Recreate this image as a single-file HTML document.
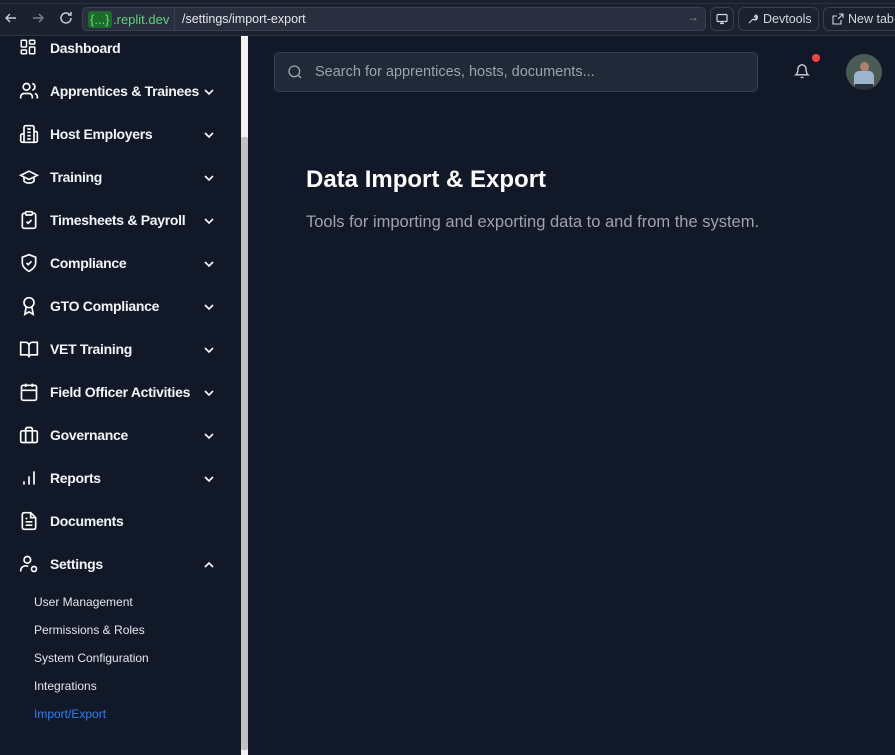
<!DOCTYPE html>
<html><head><meta charset="utf-8"><style>
*{box-sizing:border-box;margin:0;padding:0}
body{width:895px;height:755px;overflow:hidden;background:#111827;font-family:"Liberation Sans","DejaVu Sans",sans-serif;position:relative;color:#fff}
.top{position:absolute;left:0;top:0;width:895px;height:36px;background:#1c2130;border-bottom:1px solid #2b3142}
.top .tabs{position:absolute;top:0;left:0;width:895px;height:4px;border-bottom:1px solid #2b3142}
.url{position:absolute;left:82px;top:7px;width:624px;height:24px;background:#2a2f40;border:1px solid #3a4052;border-radius:5px;font-size:13px}
.btn{position:absolute;top:7px;height:24px;border:1px solid #3a4052;border-radius:6px;color:#d4d7de;font-size:12.5px;line-height:22px}
.side{position:absolute;left:0;top:36px;width:241px;height:719px;background:#111827}
.item{position:absolute;left:0;width:241px;height:20px;font-weight:bold;font-size:14px;letter-spacing:-0.3px;color:#f3f4f6}
.item svg.i{position:absolute;left:19px;top:-1px}
.item span{position:absolute;left:50px;top:1px;white-space:nowrap}
.item svg.c{position:absolute;left:203px;top:6px}
.sub{position:absolute;left:34px;font-size:12px;color:#e5e7eb}
.track{position:absolute;left:241px;top:36px;width:7px;height:719px;background:#f1f1f1}
.thumb{position:absolute;left:241px;top:137px;width:7px;height:613px;background:#c1c1c1;border-radius:2px}
.search{position:absolute;left:274px;top:52px;width:484px;height:40px;background:#1f2937;border:1px solid #374151;border-radius:6px;color:#9ca3af;font-size:14.5px}
</style></head><body>
<div class="top"><div class="tabs"></div>
<svg style="position:absolute;left:4px;top:11px" width="14" height="14" viewBox="0 0 14 14" fill="none" stroke="#c9ccd4" stroke-width="1.4"><path d="M12 7H2M6 3L2 7l4 4"/></svg>
<svg style="position:absolute;left:31px;top:11px" width="14" height="14" viewBox="0 0 14 14" fill="none" stroke="#7b808c" stroke-width="1.4"><path d="M2 7h10M8 3l4 4-4 4"/></svg>
<svg style="position:absolute;left:58px;top:10px" width="16" height="16" viewBox="0 0 16 16" fill="none" stroke="#c9ccd4" stroke-width="1.5"><path d="M13 8a5 5 0 1 1-1.5-3.6M13 2v3h-3"/></svg>
<div class="url">
<span style="position:absolute;left:5px;top:3px;background:#1d6b2a;color:#5fe07a;border-radius:3px;padding:0 2px;height:17px;line-height:17px">{...}</span>
<span style="position:absolute;left:30px;top:3px;color:#5fd37a;line-height:17px">.replit.dev</span>
<span style="position:absolute;left:91px;top:0;width:1px;height:22px;background:#3a4052"></span>
<span style="position:absolute;left:99px;top:3px;color:#e5e7eb;line-height:17px;font-size:12.5px">/settings/import-export</span>
<span style="position:absolute;left:604px;top:2px;color:#8a8f9b;font-size:12px">→</span>
</div>
<div class="btn" style="left:710px;width:24px"><svg style="position:absolute;left:5px;top:5px" width="12" height="12" viewBox="0 0 12 12" fill="none" stroke="#d4d7de" stroke-width="1.2"><rect x="1" y="1.5" width="10" height="7" rx="1"/><path d="M6 8.5v2M4 10.5h4"/></svg></div>
<div class="btn" style="left:738px;width:81px;padding-left:24px">Devtools<svg style="position:absolute;left:8px;top:5px" width="12" height="12" viewBox="0 0 12 12" fill="none" stroke="#d4d7de" stroke-width="1.1"><path d="M2 10l4-4M6 6a2.5 2.5 0 1 0 3-4L7.5 3.5 8.5 4.5 10 3a2.5 2.5 0 0 1-4 3"/></svg></div>
<div class="btn" style="left:823px;width:80px;padding-left:24px">New tab<svg style="position:absolute;left:8px;top:5px" width="12" height="12" viewBox="0 0 12 12" fill="none" stroke="#d4d7de" stroke-width="1.1"><path d="M7 1h4v4M11 1L6 6M9 7v4H1V3h4"/></svg></div>
</div>

<div class="side">
<div class="item" style="top:3px"><svg class="i" width="18" height="18" viewBox="0 0 24 24" fill="none" stroke="#fff" stroke-width="2"><rect x="3" y="3" width="7" height="9" rx="1"/><rect x="14" y="3" width="7" height="5" rx="1"/><rect x="14" y="12" width="7" height="9" rx="1"/><rect x="3" y="16" width="7" height="5" rx="1"/></svg><span>Dashboard</span></div>
<div class="item" style="top:46px"><svg class="i" width="20" height="20" viewBox="0 0 24 24" fill="none" stroke="#fff" stroke-width="2"><path d="M16 21v-2a4 4 0 0 0-4-4H6a4 4 0 0 0-4 4v2"/><circle cx="9" cy="7" r="4"/><path d="M22 21v-2a4 4 0 0 0-3-3.87M16 3.13a4 4 0 0 1 0 7.75"/></svg><span>Apprentices &amp; Trainees</span><svg class="c" width="12" height="8" viewBox="0 0 12 8" fill="none" stroke="#fff" stroke-width="1.6"><path d="M2 2l4 4 4-4"/></svg></div>
<div class="item" style="top:89px"><svg class="i" width="20" height="20" viewBox="0 0 24 24" fill="none" stroke="#fff" stroke-width="2"><path d="M6 22V4a2 2 0 0 1 2-2h8a2 2 0 0 1 2 2v18zM6 12H4a2 2 0 0 0-2 2v6a2 2 0 0 0 2 2h2M18 9h2a2 2 0 0 1 2 2v9a2 2 0 0 1-2 2h-2M10 6h4M10 10h4M10 14h4M10 18h4"/></svg><span>Host Employers</span><svg class="c" width="12" height="8" viewBox="0 0 12 8" fill="none" stroke="#fff" stroke-width="1.6"><path d="M2 2l4 4 4-4"/></svg></div>
<div class="item" style="top:132px"><svg class="i" width="20" height="20" viewBox="0 0 24 24" fill="none" stroke="#fff" stroke-width="2"><path d="M22 10L12 5 2 10l10 5 10-5zM6 12v5c3 3 9 3 12 0v-5"/></svg><span>Training</span><svg class="c" width="12" height="8" viewBox="0 0 12 8" fill="none" stroke="#fff" stroke-width="1.6"><path d="M2 2l4 4 4-4"/></svg></div>
<div class="item" style="top:175px"><svg class="i" width="20" height="20" viewBox="0 0 24 24" fill="none" stroke="#fff" stroke-width="2"><rect x="8" y="2" width="8" height="4" rx="1"/><path d="M16 4h2a2 2 0 0 1 2 2v14a2 2 0 0 1-2 2H6a2 2 0 0 1-2-2V6a2 2 0 0 1 2-2h2M9 14l2 2 4-4"/></svg><span>Timesheets &amp; Payroll</span><svg class="c" width="12" height="8" viewBox="0 0 12 8" fill="none" stroke="#fff" stroke-width="1.6"><path d="M2 2l4 4 4-4"/></svg></div>
<div class="item" style="top:218px"><svg class="i" width="20" height="20" viewBox="0 0 24 24" fill="none" stroke="#fff" stroke-width="2"><path d="M12 22s8-4 8-10V5l-8-3-8 3v7c0 6 8 10 8 10zM9 12l2 2 4-4"/></svg><span>Compliance</span><svg class="c" width="12" height="8" viewBox="0 0 12 8" fill="none" stroke="#fff" stroke-width="1.6"><path d="M2 2l4 4 4-4"/></svg></div>
<div class="item" style="top:261px"><svg class="i" width="20" height="20" viewBox="0 0 24 24" fill="none" stroke="#fff" stroke-width="2"><circle cx="12" cy="8" r="6"/><path d="M15.5 13.5L17 22l-5-3-5 3 1.5-8.5"/></svg><span>GTO Compliance</span><svg class="c" width="12" height="8" viewBox="0 0 12 8" fill="none" stroke="#fff" stroke-width="1.6"><path d="M2 2l4 4 4-4"/></svg></div>
<div class="item" style="top:304px"><svg class="i" width="20" height="20" viewBox="0 0 24 24" fill="none" stroke="#fff" stroke-width="2"><path d="M2 4h6a4 4 0 0 1 4 4v14a3 3 0 0 0-3-3H2zM22 4h-6a4 4 0 0 0-4 4v14a3 3 0 0 1 3-3h7z"/></svg><span>VET Training</span><svg class="c" width="12" height="8" viewBox="0 0 12 8" fill="none" stroke="#fff" stroke-width="1.6"><path d="M2 2l4 4 4-4"/></svg></div>
<div class="item" style="top:347px"><svg class="i" width="20" height="20" viewBox="0 0 24 24" fill="none" stroke="#fff" stroke-width="2"><rect x="3" y="4" width="18" height="18" rx="2"/><path d="M16 2v4M8 2v4M3 10h18"/></svg><span>Field Officer Activities</span><svg class="c" width="12" height="8" viewBox="0 0 12 8" fill="none" stroke="#fff" stroke-width="1.6"><path d="M2 2l4 4 4-4"/></svg></div>
<div class="item" style="top:390px"><svg class="i" width="20" height="20" viewBox="0 0 24 24" fill="none" stroke="#fff" stroke-width="2"><rect x="2" y="7" width="20" height="14" rx="2"/><path d="M16 21V5a2 2 0 0 0-2-2h-4a2 2 0 0 0-2 2v16"/></svg><span>Governance</span><svg class="c" width="12" height="8" viewBox="0 0 12 8" fill="none" stroke="#fff" stroke-width="1.6"><path d="M2 2l4 4 4-4"/></svg></div>
<div class="item" style="top:433px"><svg class="i" width="20" height="20" viewBox="0 0 24 24" fill="none" stroke="#fff" stroke-width="2"><path d="M12 20V10M18 20V4M6 20v-4"/></svg><span>Reports</span><svg class="c" width="12" height="8" viewBox="0 0 12 8" fill="none" stroke="#fff" stroke-width="1.6"><path d="M2 2l4 4 4-4"/></svg></div>
<div class="item" style="top:476px"><svg class="i" width="20" height="20" viewBox="0 0 24 24" fill="none" stroke="#fff" stroke-width="2"><path d="M14 2H6a2 2 0 0 0-2 2v16a2 2 0 0 0 2 2h12a2 2 0 0 0 2-2V8zM14 2v6h6M16 13H8M16 17H8M10 9H8"/></svg><span>Documents</span></div>
<div class="item" style="top:519px"><svg class="i" width="20" height="20" viewBox="0 0 24 24" fill="none" stroke="#fff" stroke-width="2"><circle cx="10" cy="7" r="4"/><path d="M2 21v-1a6 6 0 0 1 9-5"/><circle cx="18" cy="18" r="3"/></svg><span>Settings</span><svg class="c" width="12" height="8" viewBox="0 0 12 8" fill="none" stroke="#fff" stroke-width="1.6"><path d="M2 6l4-4 4 4"/></svg></div>
<div class="sub" style="top:559px">User Management</div>
<div class="sub" style="top:587px">Permissions &amp; Roles</div>
<div class="sub" style="top:615px">System Configuration</div>
<div class="sub" style="top:643px">Integrations</div>
<div class="sub" style="top:671px;color:#2f7ff5">Import/Export</div>
</div>
<div class="track"></div><div class="thumb"></div>

<div class="search"><svg style="position:absolute;left:12px;top:11px" width="16" height="16" viewBox="0 0 24 24" fill="none" stroke="#9ca3af" stroke-width="2"><circle cx="11" cy="11" r="8"/><path d="M21 21l-4.3-4.3"/></svg><span style="position:absolute;left:40px;top:11px">Search for apprentices, hosts, documents...</span></div>
<svg style="position:absolute;left:794px;top:63px" width="16" height="17" viewBox="0 0 24 24" fill="none" stroke="#d1d5db" stroke-width="2"><path d="M6 8a6 6 0 0 1 12 0c0 7 3 9 3 9H3s3-2 3-9M10 21h4"/></svg>
<div style="position:absolute;left:812px;top:54px;width:8px;height:8px;border-radius:50%;background:#ef4444"></div>
<div style="position:absolute;left:846px;top:54px;width:36px;height:36px;border-radius:50%;overflow:hidden;background:#4c5a56">
<div style="position:absolute;left:14px;top:8px;width:9px;height:10px;border-radius:50%;background:#b08068"></div>
<div style="position:absolute;left:8px;top:17px;width:20px;height:14px;border-radius:5px 5px 0 0;background:#9cb4d0"></div>
<div style="position:absolute;left:9px;top:30px;width:18px;height:6px;background:#2a3038"></div>
</div>

<div style="position:absolute;left:306px;top:166px;font-size:24px;font-weight:bold;color:#fff">Data Import &amp; Export</div>
<div style="position:absolute;left:306px;top:213px;font-size:16.5px;color:#9ca3af">Tools for importing and exporting data to and from the system.</div>
</body></html>
